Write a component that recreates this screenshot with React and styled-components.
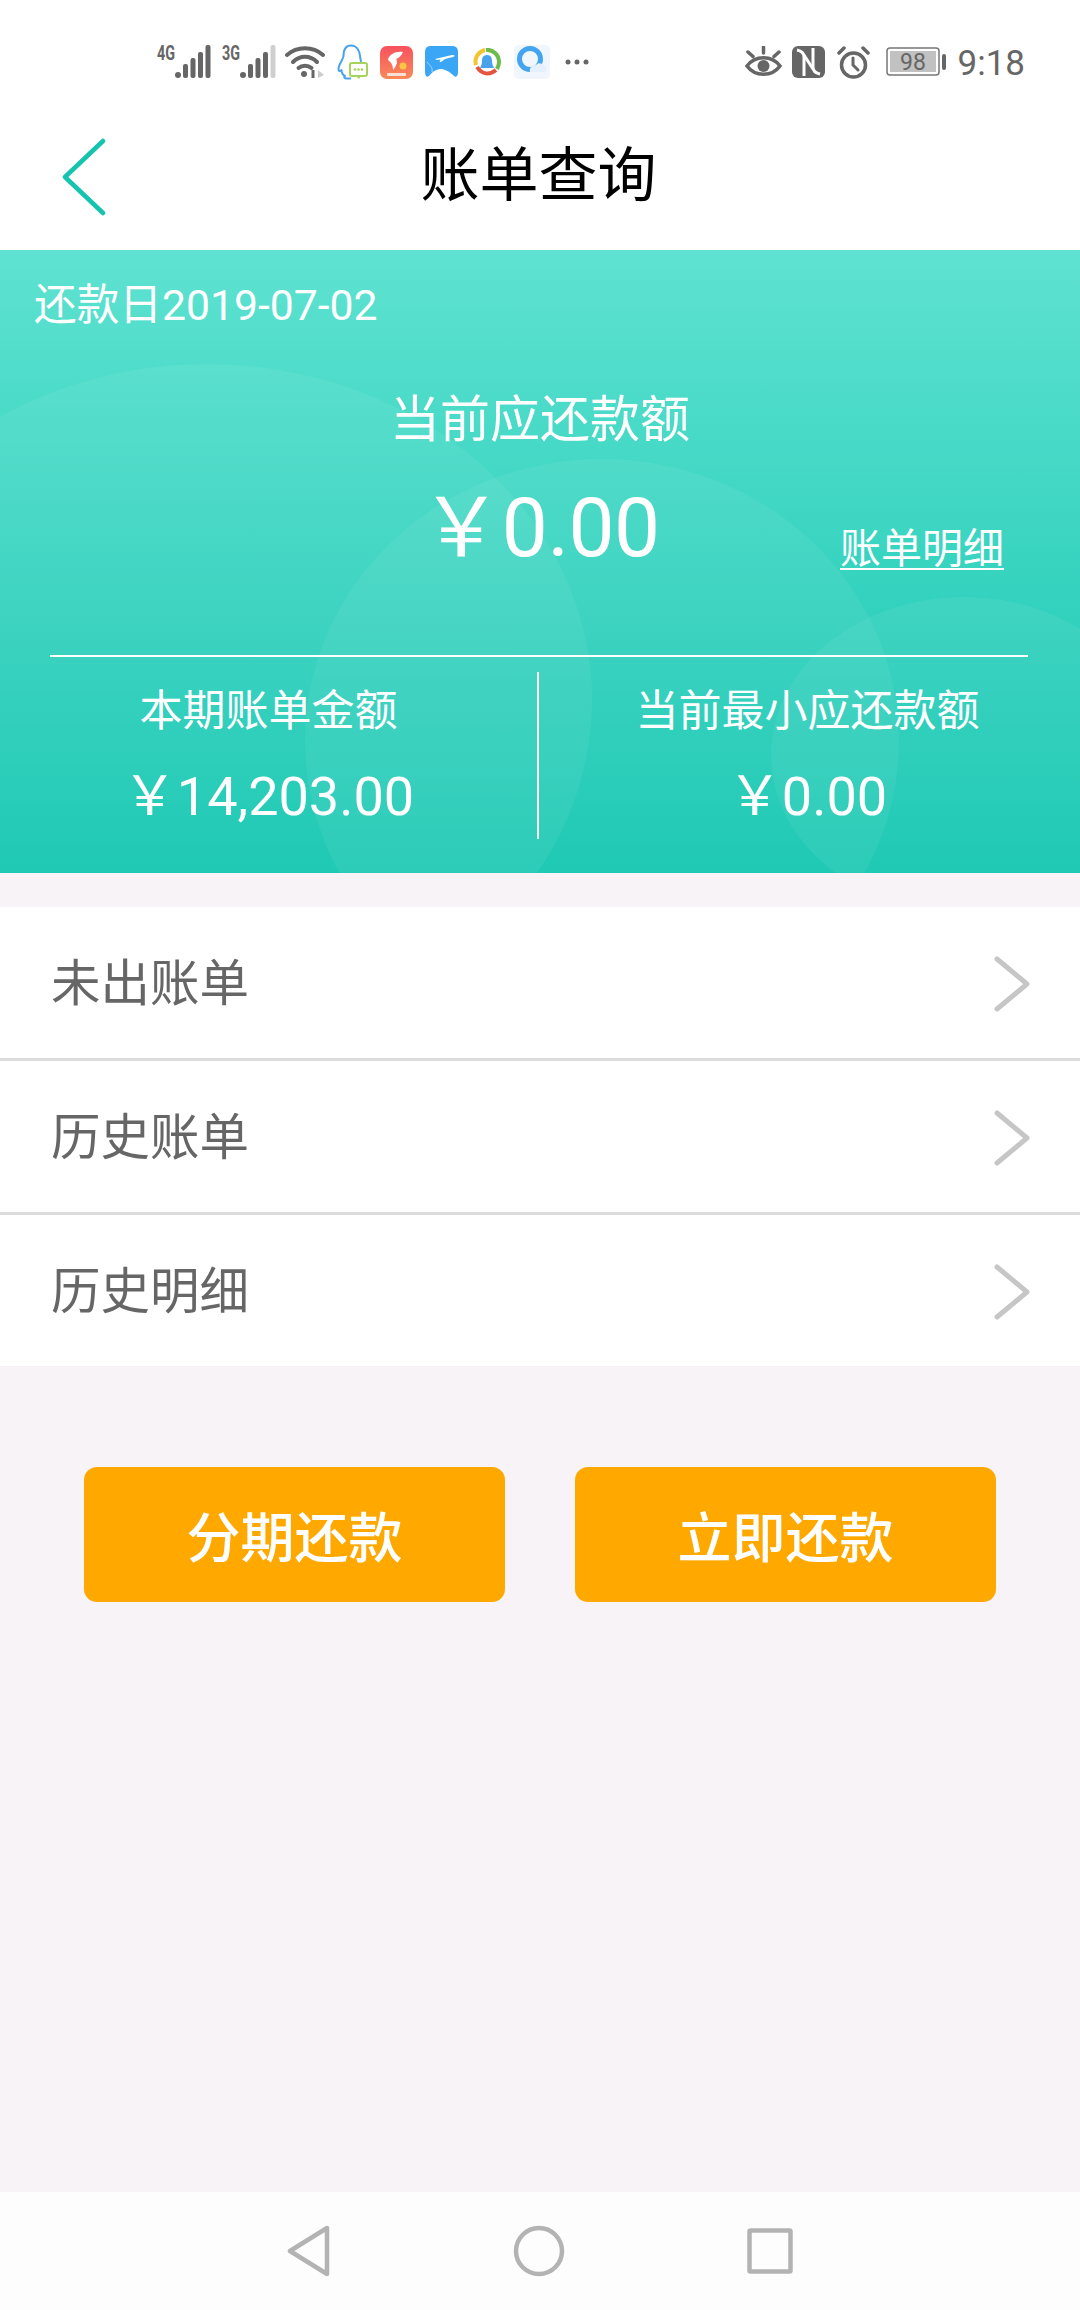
import React from "react";
import styled, { createGlobalStyle } from "styled-components";

const CJK = `"Roboto", "Noto Sans CJK SC", sans-serif`;

const Global = createGlobalStyle`
  html, body { margin: 0; padding: 0; background: #f7f3f7; }
  * { box-sizing: border-box; }
  body { font-family: ${CJK}; }
`;

const Page = styled.div`
  width: 1080px;
  height: 2310px;
  display: flex;
  flex-direction: column;
  background: #f7f3f7;
  overflow: hidden;
`;

const StatusBar = styled.div`
  height: 84px;
  background: #fff;
  display: flex;
  align-items: center;
  justify-content: space-between;
  padding: 40px 55px 0 157px;
  color: #666;
`;
const StatusGroup = styled.div`
  display: flex;
  align-items: center;
`;
const Slot = styled.span`
  display: flex;
  margin-left: ${(p) => p.$gap || 0}px;
`;
const Clock = styled.span`
  font-family: Roboto, sans-serif;
  font-size: 35px;
  margin: 3px 0 0 11px;
  line-height: 40px;
  color: #666;
`;

const NavBar = styled.header`
  height: 166px;
  background: #fff;
  position: relative;
  display: flex;
  align-items: center;
  justify-content: center;
`;
const NavTitle = styled.h1`
  margin: 0 3px 0 0;
  font-size: 59px;
  font-weight: 400;
  color: #000;
  line-height: 70px;
  transform: translateY(9px);
`;
const BackButton = styled.span`
  position: absolute;
  left: 61px;
  top: 54px;
  display: flex;
`;

const Hero = styled.section`
  height: 623px;
  position: relative;
  overflow: hidden;
  background: linear-gradient(180deg, #5fe2d1 0%, #12c6b0 100%);
  color: #fff;
  display: flex;
  flex-direction: column;
`;
const HeroArt = styled.svg`
  position: absolute;
  inset: 0;
`;
const HeroContent = styled.div`
  position: relative;
  display: flex;
  flex-direction: column;
  height: 100%;
`;
const DueDate = styled.div`
  font-size: 42.7px;
  line-height: 50px;
  padding: 30px 0 0 34px;
`;
const CurrentLabel = styled.div`
  font-size: 50px;
  line-height: 60px;
  text-align: center;
  margin-top: 60px;
`;
const AmountRow = styled.div`
  display: grid;
  grid-template-columns: 1fr auto 1fr;
  margin-top: 32px;
  height: 92px;
  align-items: center;
`;
const MainAmount = styled.div`
  grid-column: 2;
  font-size: 82px;
  line-height: 92px;
  white-space: nowrap;
  letter-spacing: -0.5px;
`;
const DetailLink = styled.a`
  grid-column: 3;
  justify-self: end;
  align-self: end;
  margin-right: 76px;
  font-size: 41px;
  line-height: 50px;
  color: #fff;
  text-decoration: underline;
  text-underline-offset: 5px;
  text-decoration-thickness: 2px;
`;
const Summary = styled.div`
  margin: 81px 52px 0 50px;
  border-top: 2px solid #fff;
  padding-top: 15px;
  display: grid;
  grid-template-columns: 487px 2px 1fr;
`;
const SummaryRule = styled.div`
  background: #fff;
  height: 167px;
`;
const SummaryColumn = styled.div`
  display: flex;
  flex-direction: column;
  align-items: center;
  padding: ${(p) => (p.$side === "left" ? "0 50px 0 0" : "0 0 0 48px")};
`;
const SummaryLabel = styled.div`
  font-size: 43px;
  line-height: 50px;
  margin-top: 14px;
`;
const SummaryValue = styled.div`
  font-size: 54px;
  line-height: 60px;
  margin-top: 31px;
  white-space: nowrap;
`;

const Menu = styled.nav`
  margin-top: 34px;
  background: #fff;
`;
const MenuRow = styled.div`
  height: ${(p) => (p.$last ? 151 : 154)}px;
  display: flex;
  align-items: center;
  justify-content: space-between;
  padding: 3px 50px 0 51px;
  border-bottom: ${(p) => (p.$last ? "none" : "3px solid #dcdcdc")};
`;
const MenuLabel = styled.span`
  font-size: 49.5px;
  color: #666;
  line-height: 60px;
`;

const Actions = styled.div`
  display: flex;
  justify-content: space-between;
  padding: 101px 84px 0;
`;
const ActionButton = styled.button`
  width: 421px;
  height: 135px;
  border: none;
  border-radius: 13px;
  background: #ffa900;
  color: #fff;
  font-family: ${CJK};
  font-size: 54px;
  font-weight: 500;
  padding: 0;
`;

const Spacer = styled.div`
  flex: 1;
`;
const SystemNav = styled.footer`
  height: 118px;
  background: #fdfdfd;
  display: flex;
  align-items: center;
  justify-content: center;
  gap: 182px;
`;

const Signal = ({ label, dim }) => (
  <svg width="54" height="42" viewBox="0 -4 54 42">
    <text x="0" y="15" fontFamily="Roboto, sans-serif" fontWeight="700" fontSize="21" fill="#666" textLength="18" lengthAdjust="spacingAndGlyphs">{label}</text>
    <circle cx="21" cy="30" r="3" fill="#666" />
    <rect x="26" y="19" width="5" height="14" rx="2" fill="#666" />
    <rect x="33.5" y="13" width="5" height="20" rx="2" fill="#666" />
    <rect x="41" y="7" width="5" height="26" rx="2" fill="#666" />
    <rect x="48.5" y="0" width="5" height="33" rx="2" fill={dim ? "#cfcfcf" : "#666"} />
  </svg>
);

const Wifi = () => (
  <svg width="40" height="34" viewBox="0 0 40 34" fill="none" stroke="#666" strokeWidth="4" strokeLinecap="round">
    <path d="M2 10C12 1 28 1 38 10" />
    <path d="M8 17C15 10 25 10 32 17" />
    <path d="M13.5 23C17 20 23 20 26.5 23" />
    <circle cx="19" cy="29" r="3" fill="#666" stroke="none" />
    <path d="M28 25V33" strokeWidth="3" strokeLinecap="butt" />
    <path d="M33 25L39 30L33 33Z" fill="#ccc" stroke="none" />
  </svg>
);

const QQ = () => (
  <svg width="31" height="36" viewBox="0 0 31 36" fill="none">
    <path d="M14 1.5C8 1.5 6.5 7 6.5 12C6.5 15 1.5 20 1.5 25C1.5 28 3 27 4.5 26C4.5 29 6 31 8 32C6 33.5 8 34.5 11 34.5H14" stroke="#4aa3ea" strokeWidth="2" strokeLinejoin="round" />
    <path d="M14 1.5C20 1.5 22.5 7 23 12L24 18" stroke="#4aa3ea" strokeWidth="2" />
    <rect x="13" y="19" width="17" height="13" rx="2" fill="#fff" stroke="#a8d35a" strokeWidth="2" />
    <path d="M19 32L22 35L24 32" fill="#a8d35a" />
    <circle cx="18" cy="25.5" r="1.3" fill="#a8d35a" />
    <circle cx="21.5" cy="25.5" r="1.3" fill="#a8d35a" />
    <circle cx="25" cy="25.5" r="1.3" fill="#a8d35a" />
  </svg>
);

const RedApp = () => (
  <svg width="33" height="33" viewBox="0 0 33 33">
    <defs>
      <linearGradient id="red" x1="0" y1="0" x2="0" y2="1">
        <stop offset="0" stopColor="#f8515f" />
        <stop offset="1" stopColor="#f88a58" />
      </linearGradient>
    </defs>
    <rect width="33" height="33" rx="7" fill="url(#red)" />
    <path d="M8 14C9 8 16 5 23 6C21 10 19 12 16 13C18 15 17 19 13 24C13 20 12 17 8 14Z" fill="#fff" />
    <circle cx="23" cy="20" r="3.5" fill="#f7c741" />
    <rect x="7" y="27" width="19" height="3" rx="1" fill="#fff" opacity=".75" />
  </svg>
);

const PlaneApp = () => (
  <svg width="33" height="32" viewBox="0 0 33 32">
    <path d="M6 0H27C31 0 33 2 33 6V26C33 30 31 32 29 30C24 25 19 23 16 23C12 23 8 25 4 30C2 32 0 30 0 26V6C0 2 2 0 6 0Z" fill="#3ba6f5" />
    <path d="M10 13L27 9C30 8.5 30 10.5 28 11L20 13L16 16H14.5L15.5 13.5L12 14Z" fill="#fff" />
    <path d="M2 16C5 20 8 21 7 26" stroke="#a9dbfb" strokeWidth="1" fill="none" />
  </svg>
);

const NewsApp = () => (
  <svg width="28" height="28" viewBox="0 0 28 28" fill="none" strokeWidth="4">
    <path d="M3 17C1 10 5 4 12 2" stroke="#f4c430" />
    <path d="M13 2C20 1 26 7 26 14C26 17 25 19 24 21" stroke="#6dbb4c" />
    <path d="M23 22C17 27 9 27 4 19" stroke="#e4553f" />
    <path d="M14 7C10 7 9 10 9 13C9 16 8 18 7 20H21C20 18 19 16 19 13C19 10 18 7 14 7Z" fill="#4aa3ea" />
  </svg>
);

const BrowserApp = () => (
  <svg width="37" height="34" viewBox="0 0 37 34">
    <rect width="36" height="34" rx="5" fill="#f1f6fc" />
    <circle cx="16" cy="14" r="10.5" fill="none" stroke="#43a4f0" strokeWidth="5" />
    <path d="M16 27C15 23 18 20 22 20C24 17 29 18 30 21C33 21 34 27 30 27Z" fill="#e4f0fb" />
  </svg>
);

const Dots = () => (
  <svg width="24" height="8" viewBox="0 0 24 8" fill="#666">
    <circle cx="3" cy="4" r="2.5" />
    <circle cx="12" cy="4" r="2.5" />
    <circle cx="21" cy="4" r="2.5" />
  </svg>
);

const Eye = () => (
  <svg width="37" height="32" viewBox="0 0 37 32" fill="none" stroke="#666" strokeWidth="3.5" strokeLinecap="round">
    <path d="M2 20C10 9 27 9 35 20C27 31 10 31 2 20Z" />
    <circle cx="18.5" cy="20" r="6" fill="#666" stroke="none" />
    <path d="M3 6L8 10.5M18.5 1V7M34 6L29 10.5" />
  </svg>
);

const Nfc = () => (
  <svg width="33" height="32" viewBox="0 0 33 32">
    <rect width="33" height="32" rx="6" fill="#666" />
    <path d="M5 4C10 5 12 7 12 11V30" stroke="#fff" strokeWidth="3" fill="none" />
    <path d="M28 28C23 27 21 25 21 21V2" stroke="#fff" strokeWidth="3" fill="none" />
    <path d="M12 9L21 23" stroke="#fff" strokeWidth="3" fill="none" />
  </svg>
);

const Alarm = () => (
  <svg width="33" height="33" viewBox="0 0 33 33" fill="none" stroke="#666" strokeWidth="3.5" strokeLinecap="round">
    <circle cx="16.5" cy="19" r="12" />
    <path d="M16 12V19L21 24" strokeWidth="3" />
    <path d="M2 7L7 2M31 7L26 2" />
  </svg>
);

const Battery = () => (
  <svg width="61" height="30" viewBox="0 0 61 30">
    <rect x="1" y="1" width="52" height="27" rx="3" fill="#fff" stroke="#777" strokeWidth="1.5" />
    <rect x="4" y="4" width="46" height="21" fill="#c1c1c1" />
    <rect x="56" y="7" width="4" height="16" rx="2" fill="#666" />
    <text x="27" y="23" textAnchor="middle" fontFamily="Roboto, sans-serif" fontSize="23" fill="#666">98</text>
  </svg>
);

const Chevron = () => (
  <svg width="36" height="56" viewBox="0 0 36 56" fill="none" stroke="#c6c6c6" strokeWidth="5" strokeLinecap="round" strokeLinejoin="round">
    <path d="M3 3L33 28L3 53" />
  </svg>
);

const Back = () => (
  <svg width="46" height="78" viewBox="0 0 46 78" fill="none" stroke="#14c4ae" strokeWidth="4.5" strokeLinecap="round" strokeLinejoin="round">
    <path d="M42 3L4 39L42 75" />
  </svg>
);

const NavBack = () => (
  <svg width="44" height="52" viewBox="0 0 44 52" fill="none" stroke="#b3b3b3" strokeWidth="4.5" strokeLinejoin="round">
    <path d="M40 3V49L3 26Z" />
  </svg>
);
const NavHome = () => (
  <svg width="52" height="52" viewBox="0 0 52 52" fill="none" stroke="#b3b3b3" strokeWidth="4.5">
    <circle cx="26" cy="26" r="23" />
  </svg>
);
const NavRecent = () => (
  <svg width="46" height="46" viewBox="0 0 46 46" fill="none" stroke="#b3b3b3" strokeWidth="4.5" strokeLinejoin="round">
    <rect x="2.5" y="2.5" width="41" height="41" rx="1" />
  </svg>
);

export default function App() {
  const rows = ["未出账单", "历史账单", "历史明细"];
  return (
    <Page>
      <Global />
      <StatusBar>
        <StatusGroup>
          <Slot><Signal label="4G" /></Slot>
          <Slot $gap={11}><Signal label="3G" dim /></Slot>
          <Slot $gap={9}><Wifi /></Slot>
          <Slot $gap={12}><QQ /></Slot>
          <Slot $gap={12}><RedApp /></Slot>
          <Slot $gap={12}><PlaneApp /></Slot>
          <Slot $gap={15}><NewsApp /></Slot>
          <Slot $gap={13}><BrowserApp /></Slot>
          <Slot $gap={14}><Dots /></Slot>
        </StatusGroup>
        <StatusGroup>
          <Slot><Eye /></Slot>
          <Slot $gap={10}><Nfc /></Slot>
          <Slot $gap={12}><Alarm /></Slot>
          <Slot $gap={16}><Battery /></Slot>
          <Clock>9:18</Clock>
        </StatusGroup>
      </StatusBar>
      <NavBar>
        <BackButton><Back /></BackButton>
        <NavTitle>账单查询</NavTitle>
      </NavBar>
      <Hero>
        <HeroArt width="1080" height="623" viewBox="0 0 1080 623" fill="#fff" fillOpacity="0.06">
          <ellipse cx="207" cy="450" rx="385" ry="336" />
          <ellipse cx="602" cy="491" rx="297" ry="282" />
          <ellipse cx="964" cy="505" rx="193" ry="158" />
        </HeroArt>
        <HeroContent>
          <DueDate>还款日2019-07-02</DueDate>
          <CurrentLabel>当前应还款额</CurrentLabel>
          <AmountRow>
            <MainAmount>￥0.00</MainAmount>
            <DetailLink>账单明细</DetailLink>
          </AmountRow>
          <Summary>
            <SummaryColumn $side="left">
              <SummaryLabel>本期账单金额</SummaryLabel>
              <SummaryValue>￥14,203.00</SummaryValue>
            </SummaryColumn>
            <SummaryRule />
            <SummaryColumn $side="right">
              <SummaryLabel>当前最小应还款额</SummaryLabel>
              <SummaryValue>￥0.00</SummaryValue>
            </SummaryColumn>
          </Summary>
        </HeroContent>
      </Hero>
      <Menu>
        {rows.map((r, i) => (
          <MenuRow key={r} $last={i === rows.length - 1}>
            <MenuLabel>{r}</MenuLabel>
            <Chevron />
          </MenuRow>
        ))}
      </Menu>
      <Actions>
        <ActionButton>分期还款</ActionButton>
        <ActionButton>立即还款</ActionButton>
      </Actions>
      <Spacer />
      <SystemNav>
        <NavBack />
        <NavHome />
        <NavRecent />
      </SystemNav>
    </Page>
  );
}
